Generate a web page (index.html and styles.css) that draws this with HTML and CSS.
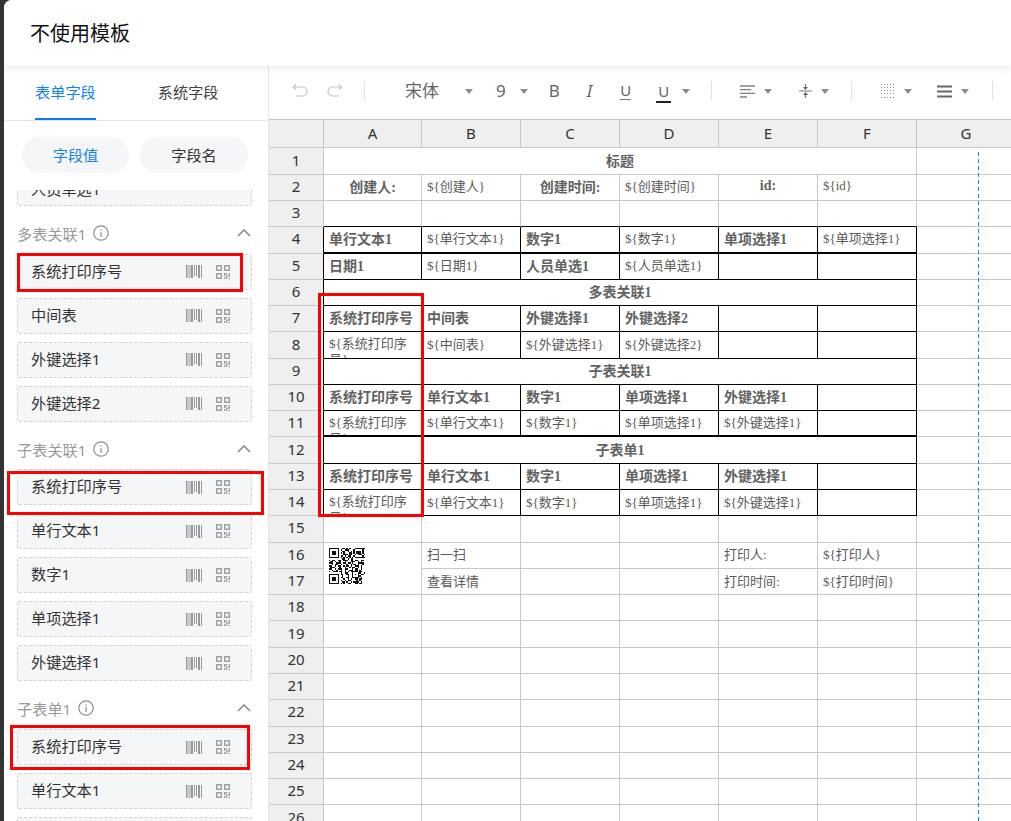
FILE: index.html
```html
<!DOCTYPE html>
<html lang="zh-CN">
<head>
<meta charset="utf-8">
<title>不使用模板</title>
<link rel="stylesheet" href="styles.css">
</head>
<body>
<svg class="defs" width="0" height="0" aria-hidden="true">
  <symbol id="barcode" viewBox="0 0 16 13">
    <path d="M0 0h1.500v13H0zM2.500 0h1v13h-1zM4.500 0h2.500v13H4.500zM8 0h1v11H8zM10 0h1v11h-1zM12 0h2v13h-2zM15 0h1v13h-1z"/>
  </symbol>
  <symbol id="qrcode" viewBox="0 0 14 14">
    <path fill-rule="evenodd" d="M0 0h6v6H0zM1.500 1.500v3h3v-3zM8 0h6v6H8zM9.500 1.500v3h3v-3zM0 8h6v6H0zM1.500 9.500v3h3v-3zM8 8h3v1.500H9.500V11H8zM12.500 8H14v4h-1.500zM10 10.500h2V12h-1v2h-1zM8 12h1.500v2H8zM12 13h2v1h-2z"/>
  </symbol>
  <symbol id="info" viewBox="0 0 16 16">
    <circle cx="8" cy="8" r="7.2" fill="none" stroke="currentColor" stroke-width="1.2"/>
    <path d="M7.400 7h1.200v5H7.400zM7.400 4.200h1.200v1.400H7.400z" fill="currentColor"/>
  </symbol>
  <symbol id="chev" viewBox="0 0 14 8">
    <path d="M1 7l6-6 6 6" fill="none" stroke="currentColor" stroke-width="1.600"/>
  </symbol>
</svg>

<div class="modal">
  <header class="modal-head">不使用模板</header>
  <div class="modal-body">
    <aside class="sidebar">
      <nav class="tabs">
        <span class="tab tab-on">表单字段</span>
        <span class="tab">系统字段</span>
      </nav>
      <div class="pills">
        <span class="pill pill-on">字段值</span>
        <span class="pill">字段名</span>
      </div>
      <div class="field-scroll">
        <div class="field-list">
          <div class="field field-cut"><span>人员单选1</span></div>

          <div class="group-head"><span>多表关联1</span><svg class="ic-info"><use href="#info"/></svg><svg class="ic-chev"><use href="#chev"/></svg></div>
          <div class="field"><span>系统打印序号</span><svg class="ic-bar"><use href="#barcode"/></svg><svg class="ic-qr"><use href="#qrcode"/></svg></div>
          <div class="field"><span>中间表</span><svg class="ic-bar"><use href="#barcode"/></svg><svg class="ic-qr"><use href="#qrcode"/></svg></div>
          <div class="field"><span>外键选择1</span><svg class="ic-bar"><use href="#barcode"/></svg><svg class="ic-qr"><use href="#qrcode"/></svg></div>
          <div class="field"><span>外键选择2</span><svg class="ic-bar"><use href="#barcode"/></svg><svg class="ic-qr"><use href="#qrcode"/></svg></div>

          <div class="group-head"><span>子表关联1</span><svg class="ic-info"><use href="#info"/></svg><svg class="ic-chev"><use href="#chev"/></svg></div>
          <div class="field"><span>系统打印序号</span><svg class="ic-bar"><use href="#barcode"/></svg><svg class="ic-qr"><use href="#qrcode"/></svg></div>
          <div class="field"><span>单行文本1</span><svg class="ic-bar"><use href="#barcode"/></svg><svg class="ic-qr"><use href="#qrcode"/></svg></div>
          <div class="field"><span>数字1</span><svg class="ic-bar"><use href="#barcode"/></svg><svg class="ic-qr"><use href="#qrcode"/></svg></div>
          <div class="field"><span>单项选择1</span><svg class="ic-bar"><use href="#barcode"/></svg><svg class="ic-qr"><use href="#qrcode"/></svg></div>
          <div class="field"><span>外键选择1</span><svg class="ic-bar"><use href="#barcode"/></svg><svg class="ic-qr"><use href="#qrcode"/></svg></div>

          <div class="group-head"><span>子表单1</span><svg class="ic-info"><use href="#info"/></svg><svg class="ic-chev"><use href="#chev"/></svg></div>
          <div class="field"><span>系统打印序号</span><svg class="ic-bar"><use href="#barcode"/></svg><svg class="ic-qr"><use href="#qrcode"/></svg></div>
          <div class="field"><span>单行文本1</span><svg class="ic-bar"><use href="#barcode"/></svg><svg class="ic-qr"><use href="#qrcode"/></svg></div>
          <div class="field"></div>
        </div>
      </div>
    </aside>

    <main class="sheet">
      <div class="toolbar">
        <svg class="tb-undo" viewBox="0 0 16 16"><path d="M4 1.500L1.500 4 4 6.500M2 4h8.500a4.500 4.500 0 0 1 0 9H4" fill="none" stroke="#c4c4c4" stroke-width="1.200"/></svg>
        <svg class="tb-redo" viewBox="0 0 16 16"><path d="M12 1.500L14.500 4 12 6.500M14 4H5.500a4.500 4.500 0 0 0 0 9H12" fill="none" stroke="#c4c4c4" stroke-width="1.200"/></svg>
        <i class="tb-sep tb-sep-a"></i>
        <span class="tb-text tb-font">宋体</span><i class="tri tri-font"></i>
        <span class="tb-text tb-size">9</span><i class="tri tri-size"></i>
        <span class="tb-text tb-b">B</span>
        <span class="tb-text tb-i">I</span>
        <span class="tb-text tb-u">U</span>
        <span class="tb-text tb-uc">U</span><i class="tri tri-uc"></i>
        <i class="tb-sep tb-sep-b"></i>
        <svg class="tb-align" viewBox="0 0 15 13"><path d="M0 1h15M0 4.700h11M0 8.300h15M0 12h7" fill="none" stroke="#808080" stroke-width="1.300"/></svg><i class="tri tri-g"></i>
        <svg class="tb-valign" viewBox="0 0 13 14"><path d="M0 7h13M6.500 0v4M6.500 10v4" fill="none" stroke="#777" stroke-width="1.200"/><path d="M4 3h5L6.500 6zM4 11h5L6.500 8z" fill="#666"/></svg><i class="tri tri-g"></i>
        <i class="tb-sep tb-sep-c"></i>
        <svg class="tb-border" viewBox="0 0 14 14"><path d="M0 .5h14M0 3.500h14M0 6.500h14M0 9.500h14M0 13.500h14" fill="none" stroke="#888" stroke-dasharray="1 2"/></svg><i class="tri tri-g"></i>
        <svg class="tb-lines" viewBox="0 0 15 13"><path d="M0 1.500h15M0 6.500h15M0 11.500h15" fill="none" stroke="#666" stroke-width="2"/></svg><i class="tri tri-g"></i>
        <i class="tb-sep tb-sep-d"></i>
      </div>

      <div class="grid">
        <div class="c h"></div><div class="c h">A</div><div class="c h">B</div><div class="c h">C</div><div class="c h">D</div><div class="c h">E</div><div class="c h">F</div><div class="c h">G</div>

        <div class="c rn">1</div><div class="c s6 ctr bold">标题</div><div class="c"></div>
        <div class="c rn">2</div><div class="c ctr bold">创建人:</div><div class="c">${创建人}</div><div class="c ctr bold">创建时间:</div><div class="c">${创建时间}</div><div class="c ctr bold">id:</div><div class="c">${id}</div><div class="c"></div>
        <div class="c rn">3</div><div class="c kb"></div><div class="c kb"></div><div class="c kb"></div><div class="c kb"></div><div class="c kb"></div><div class="c kb"></div><div class="c"></div>

        <div class="c rn rk">4</div><div class="c k kt bold">单行文本1</div><div class="c k kt">${单行文本1}</div><div class="c k kt bold">数字1</div><div class="c k kt">${数字1}</div><div class="c k kt bold">单项选择1</div><div class="c k kt">${单项选择1}</div><div class="c"></div>
        <div class="c rn rk">5</div><div class="c k bold">日期1</div><div class="c k">${日期1}</div><div class="c k bold">人员单选1</div><div class="c k">${人员单选1}</div><div class="c k"></div><div class="c k"></div><div class="c"></div>
        <div class="c rn rk">6</div><div class="c k s6 ctr bold">多表关联1</div><div class="c"></div>
        <div class="c rn rk">7</div><div class="c k bold">系统打印序号</div><div class="c k bold">中间表</div><div class="c k bold">外键选择1</div><div class="c k bold">外键选择2</div><div class="c k"></div><div class="c k"></div><div class="c"></div>
        <div class="c rn rk">8</div><div class="c k wrap">${系统打印序号}</div><div class="c k">${中间表}</div><div class="c k">${外键选择1}</div><div class="c k">${外键选择2}</div><div class="c k"></div><div class="c k"></div><div class="c"></div>
        <div class="c rn rk">9</div><div class="c k s6 ctr bold">子表关联1</div><div class="c"></div>
        <div class="c rn rk">10</div><div class="c k bold">系统打印序号</div><div class="c k bold">单行文本1</div><div class="c k bold">数字1</div><div class="c k bold">单项选择1</div><div class="c k bold">外键选择1</div><div class="c k"></div><div class="c"></div>
        <div class="c rn rk">11</div><div class="c k kt wrap">${系统打印序号}</div><div class="c k kt">${单行文本1}</div><div class="c k kt">${数字1}</div><div class="c k kt">${单项选择1}</div><div class="c k kt">${外键选择1}</div><div class="c k kt"></div><div class="c"></div>
        <div class="c rn rk">12</div><div class="c k s6 ctr bold">子表单1</div><div class="c"></div>
        <div class="c rn rk">13</div><div class="c k bold">系统打印序号</div><div class="c k bold">单行文本1</div><div class="c k bold">数字1</div><div class="c k bold">单项选择1</div><div class="c k bold">外键选择1</div><div class="c k"></div><div class="c"></div>
        <div class="c rn rk">14</div><div class="c k wrap">${系统打印序号}</div><div class="c k">${单行文本1}</div><div class="c k">${数字1}</div><div class="c k">${单项选择1}</div><div class="c k">${外键选择1}</div><div class="c k"></div><div class="c"></div>

        <div class="c rn">15</div><div class="c"></div><div class="c"></div><div class="c"></div><div class="c"></div><div class="c"></div><div class="c"></div><div class="c"></div>
        <div class="c rn">16</div>
        <div class="c qr-cell">
          <svg class="qr" viewBox="0 0 25 25" shape-rendering="crispEdges"><path d="M0 .5h7m2 0h2m1 0h1m1 0h1m3 0h7M0 1.500h1m5 0h1m1 0h1m2 0h3m3 0h1m5 0h1M0 2.500h1m1 0h3m1 0h1m2 0h2m2 0h1m1 0h1m1 0h1m1 0h3m1 0h1M0 3.500h1m1 0h3m1 0h1m1 0h1m1 0h1m3 0h2m1 0h1m1 0h3m1 0h1M0 4.500h1m1 0h3m1 0h1m3 0h3m1 0h2m2 0h1m1 0h3m1 0h1M0 5.500h1m5 0h1m1 0h2m1 0h1m1 0h2m2 0h1m5 0h1M0 6.500h7m1 0h1m1 0h1m1 0h1m1 0h1m1 0h1m1 0h7M9 7.500h2m2 0h1m1 0h2M0 8.500h1m1 0h2m2 0h2m2 0h3m2 0h2m1 0h2m2 0h2M1 9.500h2m1 0h1m2 0h1m3 0h1m3 0h3m2 0h1m1 0h1M0 10.500h3m2 0h3m2 0h2m1 0h2m1 0h1m3 0h4M2 11.500h1m1 0h2m2 0h1m3 0h1m2 0h1m1 0h2m1 0h1m2 0h1M0 12.500h2m2 0h1m1 0h2m2 0h1m1 0h2m1 0h1m2 0h3m1 0h1M1 13.500h3m3 0h1m3 0h1m2 0h1m1 0h2m2 0h1m1 0h1M0 14.500h2m2 0h1m1 0h3m2 0h2m3 0h1m1 0h2m2 0h1M2 15.500h1m2 0h1m2 0h1m2 0h1m2 0h3m1 0h2m1 0h1M0 16.500h1m2 0h3m1 0h2m2 0h1m1 0h1m1 0h5m1 0h2M8 17.500h1m2 0h2m3 0h1m3 0h2m2 0h1M0 18.500h7m1 0h2m2 0h2m2 0h1m1 0h1m1 0h1m1 0h2M0 19.500h1m5 0h1m2 0h1m3 0h1m2 0h1m3 0h2M0 20.500h1m1 0h3m1 0h1m1 0h2m2 0h2m2 0h5m1 0h1M0 21.500h1m1 0h3m1 0h1m3 0h1m2 0h1m1 0h1m2 0h2m1 0h2M0 22.500h1m1 0h3m1 0h1m1 0h1m2 0h1m1 0h2m4 0h1m1 0h1M0 23.500h1m5 0h1m2 0h2m1 0h1m2 0h1m1 0h4m1 0h1M0 24.500h7m1 0h1m1 0h1m2 0h2m3 0h2m1 0h2" fill="none" stroke="#111"/></svg>
        </div>
        <div class="c">扫一扫</div><div class="c"></div><div class="c"></div><div class="c">打印人:</div><div class="c">${打印人}</div><div class="c"></div>
        <div class="c rn">17</div><div class="c">查看详情</div><div class="c"></div><div class="c"></div><div class="c">打印时间:</div><div class="c">${打印时间}</div><div class="c"></div>

        <div class="c rn">18</div><div class="c"></div><div class="c"></div><div class="c"></div><div class="c"></div><div class="c"></div><div class="c"></div><div class="c"></div>
        <div class="c rn">19</div><div class="c"></div><div class="c"></div><div class="c"></div><div class="c"></div><div class="c"></div><div class="c"></div><div class="c"></div>
        <div class="c rn">20</div><div class="c"></div><div class="c"></div><div class="c"></div><div class="c"></div><div class="c"></div><div class="c"></div><div class="c"></div>
        <div class="c rn">21</div><div class="c"></div><div class="c"></div><div class="c"></div><div class="c"></div><div class="c"></div><div class="c"></div><div class="c"></div>
        <div class="c rn">22</div><div class="c"></div><div class="c"></div><div class="c"></div><div class="c"></div><div class="c"></div><div class="c"></div><div class="c"></div>
        <div class="c rn">23</div><div class="c"></div><div class="c"></div><div class="c"></div><div class="c"></div><div class="c"></div><div class="c"></div><div class="c"></div>
        <div class="c rn">24</div><div class="c"></div><div class="c"></div><div class="c"></div><div class="c"></div><div class="c"></div><div class="c"></div><div class="c"></div>
        <div class="c rn">25</div><div class="c"></div><div class="c"></div><div class="c"></div><div class="c"></div><div class="c"></div><div class="c"></div><div class="c"></div>
        <div class="c rn">26</div><div class="c"></div><div class="c"></div><div class="c"></div><div class="c"></div><div class="c"></div><div class="c"></div><div class="c"></div>
      </div>
    </main>
  </div>
</div>

<div class="page-break"></div>
<div class="mark mark-a"></div>
<div class="mark mark-b"></div>
<div class="mark mark-c"></div>
<div class="mark mark-d"></div>
</body>
</html>
```
FILE: styles.css
```css
* { box-sizing: border-box; }
html, body { margin: 0; height: 821px; overflow: hidden; }
body {
  position: relative;
  background: #333;
  font-family: "Noto Sans", "Noto Sans CJK SC", sans-serif;
  color: #333;
}
.defs { position: absolute; }

.modal {
  margin-left: 4px;
  height: 821px;
  background: #fff;
  border-top-left-radius: 8px;
  overflow: hidden;
  display: flex;
  flex-direction: column;
}
.modal-head {
  position: relative;
  z-index: 2;
  flex: 0 0 66px;
  padding: 0 0 2px 26px;
  display: flex;
  align-items: center;
  font-size: 20px;
  color: #111;
  background: #fff;
  box-shadow: 0 2px 8px rgba(0, 0, 0, .09);
}
.modal-body { flex: 1; display: flex; min-height: 0; }

/* sidebar */
.sidebar {
  flex: 0 0 265px;
  border-right: 1px solid #e4e4e4;
  display: flex;
  flex-direction: column;
  min-height: 0;
}
.tabs {
  flex: 0 0 54px;
  display: flex;
  gap: 62px;
  padding-left: 31px;
  border-bottom: 1px solid #e5e5e5;
}
.tab {
  height: 54px;
  padding-bottom: 3px;
  display: flex;
  align-items: center;
  font-size: 15.2px;
  color: #444;
  border-bottom: 2px solid transparent;
}
.tab-on { color: #1482f0; border-bottom-color: #0a7cf0; }
.pills {
  flex: 0 0 69px;
  padding: 16px 0 0 18px;
  display: flex;
  gap: 11px;
}
.pill {
  flex: 0 0 107px;
  height: 36px;
  padding-bottom: 2px;
  border-radius: 18px;
  background: #f5f6f8;
  display: flex;
  align-items: center;
  justify-content: center;
  font-size: 15.2px;
  color: #333;
}
.pill + .pill { flex-basis: 108px; }
.pill-on { color: #1482f0; }
.field-scroll { flex: 1; overflow: hidden; min-height: 0; }
.field-list { margin: -20px 0 0 13px; width: 235px; }
.field {
  height: 36px;
  margin-bottom: 8px;
  padding: 0 21px 0 13px;
  display: flex;
  align-items: center;
  gap: 14px;
  background: #f5f6f8;
  border: 1px dashed #d2d2d2;
  border-radius: 2px;
  font-size: 15.2px;
  color: #333;
}
.field span { margin: 0 auto 4px 0; }
.field-cut span { margin-bottom: 0; }
.ic-bar { width: 16px; height: 13px; fill: #9a9a9a; }
.ic-qr { width: 14px; height: 14px; fill: #a0a0a0; }
.group-head {
  height: 39.7px;
  padding-bottom: 2px;
  display: flex;
  align-items: center;
  font-size: 15.2px;
  color: #999;
}
.ic-info { width: 16px; height: 16px; margin-left: 7px; color: #8c8c8c; }
.ic-chev { width: 14px; height: 8px; margin-left: auto; margin-right: 1px; color: #8c8c8c; }

/* toolbar */
.sheet { flex: 1; min-width: 0; overflow: hidden; display: flex; flex-direction: column; }
.toolbar {
  flex: 0 0 54px;
  display: flex;
  align-items: center;
  padding: 0 0 3px 23px;
  border-bottom: 1px solid #c8c8c8;
  white-space: nowrap;
}
.tb-undo, .tb-redo { width: 16px; height: 16px; flex: none; }
.tb-redo { margin-left: 19px; }
.tb-sep { flex: none; width: 1px; height: 20px; background: #e0e0e0; }
.tb-sep-a { margin-left: 21px; }
.tb-sep-b { margin-left: 21px; }
.tb-sep-c { margin-left: 22px; }
.tb-sep-d { margin-left: 23px; }
.tb-text { font-size: 17px; color: #666; line-height: 20px; }
.tb-font { margin-left: 40px; }
.tb-size { margin-left: 23px; }
.tb-b { margin-left: 21px; }
.tb-i { margin-left: 27px; font-style: italic; }
.tb-u { margin-left: 28px; font-size: 15px; border-bottom: 1px solid #777; line-height: 17px; }
.tb-uc { margin-left: 25px; padding: 0 2px; font-size: 15px; border-bottom: 2px solid #222; line-height: 19px; margin-top: 2px; }
.tri {
  flex: none;
  width: 0;
  height: 0;
  border-style: solid;
  border-width: 5px 4px 0;
  border-color: #8c8c8c transparent transparent;
}
.tri-font { margin-left: 26px; }
.tri-size { margin-left: 14px; }
.tri-uc { margin-left: 11px; }
.tri-g { margin-left: 9px; }
.tb-align { margin-left: 28px; width: 15px; height: 13px; flex: none; }
.tb-valign { margin-left: 27px; width: 13px; height: 14px; flex: none; }
.tb-border { margin-left: 29px; width: 14px; height: 14px; flex: none; }
.tb-lines { margin-left: 25px; width: 15px; height: 13px; flex: none; }

/* grid */
.grid {
  display: grid;
  grid-template-columns: 55px 98px 99px 99px 99px 99px 99px 99px;
  grid-template-rows: 28.4px repeat(26, 26.29px);
  flex: none;
  width: 747px;
  font-family: "Liberation Serif", "Noto Sans CJK SC", serif;
  font-size: 13px;
  color: #5a5a5a;
}
.c {
  border-right: 1px solid #c8c8c8;
  border-bottom: 1px solid #c8c8c8;
  padding: 0 5px 3px;
  display: flex;
  align-items: center;
  overflow: hidden;
  white-space: nowrap;
  min-width: 0;
  min-height: 0;
}
.h, .rn {
  background: #efefef;
  justify-content: center;
  font-family: "Noto Sans", "Noto Sans CJK SC", sans-serif;
  font-size: 15px;
  color: #333;
}
.h { padding-bottom: 1px; }
.rk { border-right-color: #000; }
.k { border-right-color: #000; border-bottom-color: #000; }
.kb { border-bottom-color: #000; }
.kt { border-bottom-width: 2px; }
.s6 { grid-column: span 6; }
.ctr { justify-content: center; }
.bold { font-weight: 700; font-size: 14px; color: #626262; }
.wrap {
  display: block;
  white-space: normal;
  line-height: 16px;
  padding: 4px 5px 0;
}
.qr-cell { grid-row: span 2; align-items: flex-start; padding-top: 5px; }
.qr { width: 36px; height: 36px; flex: none; }

/* overlays */
.page-break {
  position: absolute;
  left: 978px;
  top: 152px;
  bottom: 0;
  width: 1px;
  background: repeating-linear-gradient(#0a84ff 0 4px, transparent 4px 7px);
}
.mark { position: absolute; border: 3px solid #f00; }
.mark-a { left: 17px; top: 253px; width: 226px; height: 39px; }
.mark-b { left: 7px; top: 471px; width: 257px; height: 44px; }
.mark-c { left: 10px; top: 725px; width: 240px; height: 45px; }
.mark-d { left: 318px; top: 293px; width: 106px; height: 224px; }
```
